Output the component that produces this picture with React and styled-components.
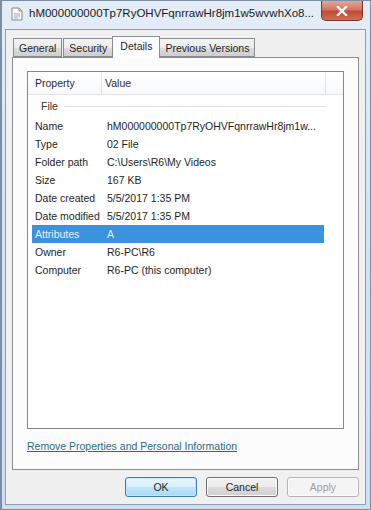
import React from "react";
import styled, { createGlobalStyle } from "styled-components";

const GlobalStyle = createGlobalStyle`
  html, body {
    margin: 0;
    padding: 0;
    background: #dbe6f2;
  }
  body {
    font-family: "Liberation Sans", Arial, sans-serif;
    font-size: 10.5px;
    color: #1e1e1e;
  }
`;

const propriedades = [
  { nome: "Name", valor: "hM000000000Tp7RyOHVFqnrrawHr8jm1w..." },
  { nome: "Type", valor: "02 File" },
  { nome: "Folder path", valor: "C:\\Users\\R6\\My Videos" },
  { nome: "Size", valor: "167 KB" },
  { nome: "Date created", valor: "5/5/2017 1:35 PM" },
  { nome: "Date modified", valor: "5/5/2017 1:35 PM" },
  { nome: "Attributes", valor: "A", selecionado: true },
  { nome: "Owner", valor: "R6-PC\\R6" },
  { nome: "Computer", valor: "R6-PC (this computer)" },
];

const abas = ["General", "Security", "Details", "Previous Versions"];

const Janela = styled.div`
  width: 371px;
  height: 510px;
  box-sizing: border-box;
  display: flex;
  flex-direction: column;
  background: linear-gradient(to bottom, #e4edf7 0%, #d5e3f1 40%, #cfdff0 100%);
  border: 1px solid #7b8ea5;
  border-left-width: 2px;
  overflow: hidden;
`;

const BarraTitulo = styled.div`
  height: 28px;
  display: flex;
  align-items: flex-start;
  padding-left: 8px;
  flex-shrink: 0;
`;

const IconeTitulo = styled.svg`
  width: 14px;
  height: 14px;
  margin-top: 6px;
  margin-right: 5px;
  flex-shrink: 0;
`;

const TextoTitulo = styled.div`
  flex: 1;
  font-family: "Liberation Sans", Arial, sans-serif;
  font-size: 11.5px;
  color: #1b1b1b;
  margin-top: 6px;
  white-space: nowrap;
  overflow: hidden;
`;

const BotaoFechar = styled.div`
  width: 42px;
  height: 20px;
  margin-right: 7px;
  margin-left: 4px;
  box-sizing: border-box;
  border: 1px solid #7a3229;
  border-top: none;
  border-radius: 0 0 5px 5px;
  background: linear-gradient(to bottom, #e6a597 0%, #d37562 45%, #c24a37 55%, #cf6e58 100%);
  display: flex;
  align-items: center;
  justify-content: center;
  flex-shrink: 0;
`;

const AreaCliente = styled.div`
  flex: 1;
  margin: 0 4px 4px 3px;
  background: #f0f0f0;
  border: 1px solid #8f9fb3;
  display: flex;
  flex-direction: column;
  padding: 5px 6px 0 6px;
`;

const FaixaAbas = styled.div`
  display: flex;
  align-items: flex-end;
  height: 22px;
  padding-left: 1px;
  position: relative;
  z-index: 1;
`;

const Aba = styled.div`
  height: ${({ ativa }) => (ativa ? "22px" : "19px")};
  box-sizing: border-box;
  padding: 0 ${({ ativa }) => (ativa ? "7px" : "5px")};
  margin-right: ${({ ativa }) => (ativa ? "-1px" : "1px")};
  margin-left: ${({ ativa }) => (ativa ? "-2px" : "0")};
  margin-bottom: ${({ ativa }) => (ativa ? "-1px" : "0")};
  display: flex;
  align-items: center;
  border: 1px solid #898c95;
  border-bottom: ${({ ativa }) => (ativa ? "none" : "1px solid #898c95")};
  background: ${({ ativa }) =>
    ativa ? "#ffffff" : "linear-gradient(to bottom, #f3f3f3 0%, #ebebeb 50%, #dddddd 51%, #cfcfcf 100%)"};
  color: #1e1e1e;
  white-space: nowrap;
  padding-bottom: ${({ ativa }) => (ativa ? "3px" : "0")};
`;

const PainelAba = styled.div`
  flex: 1;
  background: #fcfcfc;
  border: 1px solid #898c95;
  padding: 13px 14px 0 14px;
  display: flex;
  flex-direction: column;
`;

const CaixaLista = styled.div`
  height: 356px;
  border: 1px solid #828790;
  background: #ffffff;
  padding: 0 4px;
  display: flex;
  flex-direction: column;
`;

const Cabecalho = styled.div`
  height: 22px;
  display: flex;
  align-items: center;
  border-bottom: 1px solid #e5e5e5;
  margin: 0 -4px;
  padding: 0 4px;
  background: linear-gradient(to bottom, #ffffff 0%, #f7f8fa 100%);
`;

const ColunaCabecalho = styled.div`
  width: ${({ largura }) => largura}px;
  height: 100%;
  box-sizing: border-box;
  padding-left: 3px;
  display: flex;
  align-items: center;
  border-right: ${({ divisor }) => (divisor ? "1px solid #e3e5e8" : "none")};
  flex: ${({ largura }) => (largura ? "none" : 1)};
  color: #2b2b2b;
`;

const Grupo = styled.div`
  height: 22px;
  display: flex;
  align-items: center;
  padding-left: 9px;
  margin-right: 13px;
  color: #333;
`;

const LinhaGrupo = styled.div`
  flex: 1;
  height: 1px;
  background: #dfe3e8;
  margin-left: 6px;
`;

const Linha = styled.div`
  height: 18px;
  display: flex;
  align-items: center;
  margin-right: 15px;
  background: ${({ selecionado }) => (selecionado ? "#3b92de" : "transparent")};
  color: ${({ selecionado }) => (selecionado ? "#e6f1fb" : "#1e1e1e")};
`;

const Celula = styled.div`
  width: ${({ largura }) => (largura ? `${largura}px` : "auto")};
  flex: ${({ largura }) => (largura ? "none" : 1)};
  padding-left: 3px;
  box-sizing: border-box;
  white-space: nowrap;
  overflow: hidden;
`;

const LinkRemover = styled.a`
  margin-top: 11px;
  color: #2a6a86;
  text-decoration: underline;
  text-decoration-color: #2a6a86;
  cursor: pointer;
`;

const RodapeBotoes = styled.div`
  height: 34px;
  display: flex;
  align-items: center;
  justify-content: flex-end;
  gap: 9px;
`;

const Botao = styled.div`
  width: 72px;
  height: 20px;
  box-sizing: border-box;
  border: 1px solid ${({ desativado, padrao }) => (desativado ? "#b5b5b5" : padrao ? "#3c7fb1" : "#707070")};
  border-radius: 3px;
  display: flex;
  align-items: center;
  justify-content: center;
  color: ${({ desativado }) => (desativado ? "#a0a0a0" : "#1e1e1e")};
  background: ${({ desativado, padrao }) =>
    desativado
      ? "#f4f4f4"
      : padrao
      ? "linear-gradient(to bottom, #eaf6fd 0%, #d9f0fc 50%, #bee6fd 51%, #a7d9f5 100%)"
      : "linear-gradient(to bottom, #f2f2f2 0%, #ebebeb 50%, #dddddd 51%, #cfcfcf 100%)"};
  box-shadow: ${({ padrao }) => (padrao ? "inset 0 0 0 1px #c3e6fa" : "inset 0 0 0 1px #fbfbfb")};
`;

const App = () => {
  return (
    <>
      <GlobalStyle />
      <Janela>
        <BarraTitulo>
          <IconeTitulo viewBox="0 0 14 14">
            <path d="M2 1h7l3 3v9H2z" fill="#f8f8f8" stroke="#8a8a8a" strokeWidth="1" />
            <path d="M9 1v3h3" fill="none" stroke="#8a8a8a" strokeWidth="1" />
            <path d="M4 7h6M4 9h6M4 11h4" stroke="#9aa7b5" strokeWidth="1" />
          </IconeTitulo>
          <TextoTitulo>hM000000000Tp7RyOHVFqnrrawHr8jm1w5wvwhXo8...</TextoTitulo>
          <BotaoFechar>
            <svg width="12" height="10" viewBox="0 0 12 10">
              <path d="M2 1l8 8M10 1l-8 8" stroke="#ffffff" strokeWidth="2.4" strokeLinecap="square" />
            </svg>
          </BotaoFechar>
        </BarraTitulo>
        <AreaCliente>
          <FaixaAbas>
            {abas.map((aba) => (
              <Aba key={aba} ativa={aba === "Details"}>
                {aba}
              </Aba>
            ))}
          </FaixaAbas>
          <PainelAba>
            <CaixaLista>
              <Cabecalho>
                <ColunaCabecalho largura={70} divisor>
                  Property
                </ColunaCabecalho>
                <ColunaCabecalho largura={224} divisor>
                  Value
                </ColunaCabecalho>
                <ColunaCabecalho />
              </Cabecalho>
              <Grupo>
                File
                <LinhaGrupo />
              </Grupo>
              {propriedades.map((p) => (
                <Linha key={p.nome} selecionado={p.selecionado}>
                  <Celula largura={72}>{p.nome}</Celula>
                  <Celula>{p.valor}</Celula>
                </Linha>
              ))}
            </CaixaLista>
            <LinkRemover>Remove Properties and Personal Information</LinkRemover>
          </PainelAba>
          <RodapeBotoes>
            <Botao padrao>OK</Botao>
            <Botao>Cancel</Botao>
            <Botao desativado>Apply</Botao>
          </RodapeBotoes>
        </AreaCliente>
      </Janela>
    </>
  );
};

export default App;
